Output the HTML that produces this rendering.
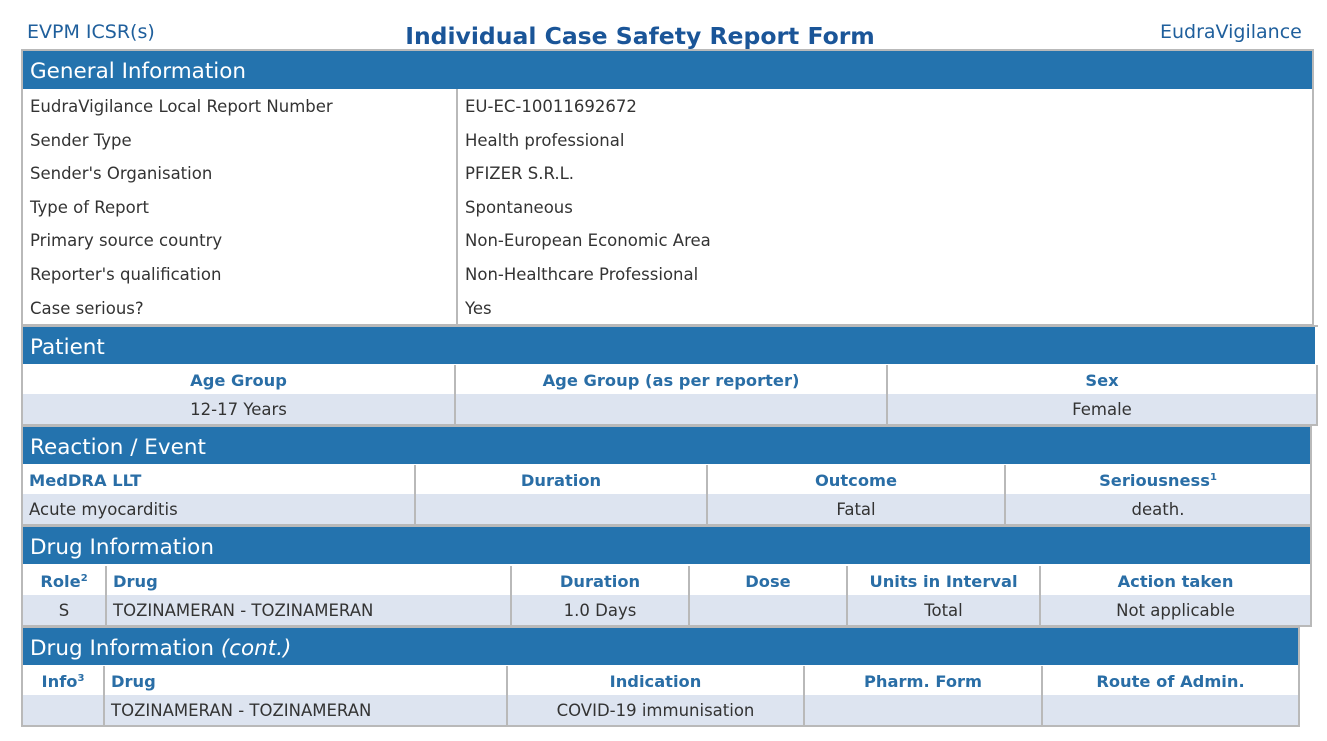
<!DOCTYPE html>
<html><head><meta charset="utf-8"><style>
body{margin:0;width:1327px;height:741px;background:#fff;position:relative;overflow:hidden;font-family:"DejaVu Sans","Liberation Sans",sans-serif;color:#333}
.a{position:absolute;box-sizing:border-box}
.top{color:#1f5f9c;font-size:19px;top:21px}
.title{color:#1a5598;font-size:23.5px;font-weight:bold;top:22px;left:0;width:1280px;text-align:center}
.bar{background:#2473ae;color:#fff;font-size:21.5px;padding-left:7px;line-height:41px}
.sec{border:2px solid #b9b9b9}
.c{font-size:16.5px;line-height:31px;height:29px;border-left:2px solid #b9b9b9;text-align:center;white-space:nowrap}
.h{font-weight:bold;color:#2a6ea6;background:#fff;font-size:16.3px}
.d{background:#dde4f0;color:#333;height:30px;line-height:31px}
.l{text-align:left;padding-left:6px}
.row{font-size:16.5px;line-height:34px;height:33.6px;padding-left:7px;white-space:nowrap}
sup{font-size:10px;position:relative;top:-6px;vertical-align:baseline;line-height:0}
</style></head><body>
<div class="a top" style="left:27px">EVPM ICSR(s)</div>
<div class="a title">Individual Case Safety Report Form</div>
<div class="a top" style="left:1160px">EudraVigilance</div>

<div class="a sec" style="left:21px;top:49px;width:1293px;height:277px"></div>
<div class="a bar" style="left:23px;top:51px;width:1289px;height:38px">General Information</div>
<div class="a" style="left:456px;top:89px;width:2px;height:235px;background:#b9b9b9"></div>
<div class="a" style="left:23px;top:90px;width:430px">
<div class="row">EudraVigilance Local Report Number</div><div class="row">Sender Type</div><div class="row">Sender's Organisation</div><div class="row">Type of Report</div><div class="row">Primary source country</div><div class="row">Reporter's qualification</div><div class="row">Case serious?</div></div>
<div class="a" style="left:458px;top:90px;width:800px">
<div class="row">EU-EC-10011692672</div><div class="row">Health professional</div><div class="row">PFIZER S.R.L.</div><div class="row">Spontaneous</div><div class="row">Non-European Economic Area</div><div class="row">Non-Healthcare Professional</div><div class="row">Yes</div></div>

<div class="a sec" style="left:21px;top:325px;width:1297px;height:101px;border-right:none"></div>
<div class="a bar" style="left:23px;top:327px;width:1292px;height:37px">Patient</div>
<div class="a c h" style="left:23px;top:365px;width:431px;border-left:none">Age Group</div>
<div class="a c d" style="left:23px;top:394px;width:431px;border-left:none">12-17 Years</div>
<div class="a c h" style="left:454px;top:365px;width:432px">Age Group (as per reporter)</div>
<div class="a c d" style="left:454px;top:394px;width:432px"></div>
<div class="a c h" style="left:886px;top:365px;width:432px;border-right:2px solid #b9b9b9">Sex</div>
<div class="a c d" style="left:886px;top:394px;width:432px;border-right:2px solid #b9b9b9;border-bottom:2px solid #b9b9b9;height:32px">Female</div>

<div class="a sec" style="left:21px;top:425px;width:1291px;height:101px"></div>
<div class="a bar" style="left:23px;top:427px;width:1287px;height:37px">Reaction / Event</div>
<div class="a c h l" style="left:23px;top:465px;width:391px;border-left:none">MedDRA LLT</div>
<div class="a c d l" style="left:23px;top:494px;width:391px;border-left:none">Acute myocarditis</div>
<div class="a c h" style="left:414px;top:465px;width:292px">Duration</div>
<div class="a c d" style="left:414px;top:494px;width:292px"></div>
<div class="a c h" style="left:706px;top:465px;width:298px">Outcome</div>
<div class="a c d" style="left:706px;top:494px;width:298px">Fatal</div>
<div class="a c h" style="left:1004px;top:465px;width:306px">Seriousness<sup>1</sup></div>
<div class="a c d" style="left:1004px;top:494px;width:306px">death.</div>

<div class="a sec" style="left:21px;top:525px;width:1291px;height:102px"></div>
<div class="a bar" style="left:23px;top:527px;width:1287px;height:37px">Drug Information</div>
<div class="a c h" style="left:23px;top:566px;width:82px;border-left:none">Role<sup>2</sup></div>
<div class="a c d" style="left:23px;top:595px;width:82px;border-left:none">S</div>
<div class="a c h l" style="left:105px;top:566px;width:405px">Drug</div>
<div class="a c d l" style="left:105px;top:595px;width:405px">TOZINAMERAN - TOZINAMERAN</div>
<div class="a c h" style="left:510px;top:566px;width:178px">Duration</div>
<div class="a c d" style="left:510px;top:595px;width:178px">1.0 Days</div>
<div class="a c h" style="left:688px;top:566px;width:158px">Dose</div>
<div class="a c d" style="left:688px;top:595px;width:158px"></div>
<div class="a c h" style="left:846px;top:566px;width:193px">Units in Interval</div>
<div class="a c d" style="left:846px;top:595px;width:193px">Total</div>
<div class="a c h" style="left:1039px;top:566px;width:271px">Action taken</div>
<div class="a c d" style="left:1039px;top:595px;width:271px">Not applicable</div>

<div class="a sec" style="left:21px;top:626px;width:1279px;height:101px"></div>
<div class="a bar" style="left:23px;top:628px;width:1275px;height:37px">Drug Information <i>(cont.)</i></div>
<div class="a c h" style="left:23px;top:666px;width:80px;border-left:none">Info<sup>3</sup></div>
<div class="a c d" style="left:23px;top:695px;width:80px;border-left:none"></div>
<div class="a c h l" style="left:103px;top:666px;width:403px">Drug</div>
<div class="a c d l" style="left:103px;top:695px;width:403px">TOZINAMERAN - TOZINAMERAN</div>
<div class="a c h" style="left:506px;top:666px;width:297px">Indication</div>
<div class="a c d" style="left:506px;top:695px;width:297px">COVID-19 immunisation</div>
<div class="a c h" style="left:803px;top:666px;width:238px">Pharm. Form</div>
<div class="a c d" style="left:803px;top:695px;width:238px"></div>
<div class="a c h" style="left:1041px;top:666px;width:257px">Route of Admin.</div>
<div class="a c d" style="left:1041px;top:695px;width:257px"></div>
</body></html>
